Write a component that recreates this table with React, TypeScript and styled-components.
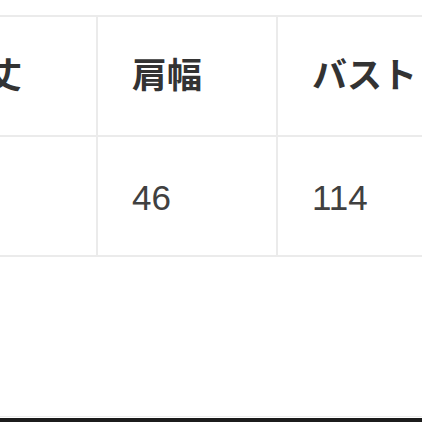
import styled, { createGlobalStyle } from 'styled-components';

const GlobalStyle = createGlobalStyle`
  html, body {
    margin: 0;
    padding: 0;
    background: #ffffff;
  }
  body {
    font-family: "Liberation Sans", "Noto Sans CJK JP", sans-serif;
    color: #333333;
  }
`;

const Page = styled.div`
  width: 422px;
  height: 422px;
  overflow: hidden;
  display: flex;
  flex-direction: column;
  background: #ffffff;
`;

const TableArea = styled.div`
  flex: 1;
  padding-top: 15px;
  margin-left: -84px;
`;

const SizeTable = styled.table`
  border-collapse: collapse;
  table-layout: fixed;
  width: 540px;
`;

const HeadCell = styled.th`
  width: 180px;
  height: 120px;
  box-sizing: border-box;
  padding: 0 0 8px 34px;
  border: 2px solid #ebebeb;
  text-align: left;
  vertical-align: middle;
  font-family: "Noto Sans CJK JP", sans-serif;
  font-weight: 700;
  font-size: 35px;
  color: #333333;
  white-space: nowrap;
`;

const DataCell = styled.td`
  height: 120px;
  box-sizing: border-box;
  padding: 4px 0 0 34px;
  border: 2px solid #ebebeb;
  text-align: left;
  vertical-align: middle;
  font-family: "Liberation Sans", "Noto Sans CJK JP", sans-serif;
  font-size: 35px;
  color: #404040;
`;

const BottomBar = styled.div`
  height: 4px;
  border-top: 1px solid #ececec;
  padding-top: 1px;
  background-clip: content-box;
  background-color: #1c1c1c;
`;

const headers = ['着丈', '肩幅', 'バスト'];
const values = ['', '46', '114'];

const App = () => {
  return (
    <Page>
      <GlobalStyle />
      <TableArea>
        <SizeTable>
          <thead>
            <tr>
              {headers.map((h) => (
                <HeadCell key={h}>{h}</HeadCell>
              ))}
            </tr>
          </thead>
          <tbody>
            <tr>
              {values.map((v, i) => (
                <DataCell key={i}>{v}</DataCell>
              ))}
            </tr>
          </tbody>
        </SizeTable>
      </TableArea>
      <BottomBar />
    </Page>
  );
};

export default App;
